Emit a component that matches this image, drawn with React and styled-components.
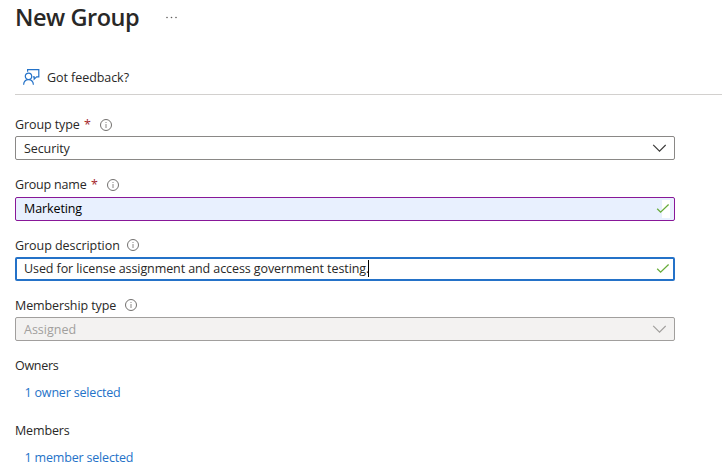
import React from "react";
import styled, { createGlobalStyle } from "styled-components";

const Global = createGlobalStyle`
  * { box-sizing: border-box; }
  body {
    margin: 0;
    background: #fff;
    color: #292827;
    font: 12.5px/18px "Open Sans", "Noto Sans", sans-serif;
    overflow: hidden;
  }
`;

const Page = styled.main`
  width: 722px;
  height: 475px;
  padding-left: 15px;
  overflow: hidden;
`;

const Header = styled.header`
  height: 60px;
  display: flex;
  align-items: flex-start;
  gap: 26px;
`;

const Title = styled.h1`
  margin: 0;
  width: 125px;
  font-size: 23.5px;
  line-height: 34px;
  font-weight: 600;
  letter-spacing: -0.45px;
  white-space: nowrap;
`;

const MoreIcon = styled.svg`
  margin-top: 16px;
  fill: #605e5c;
`;

const Toolbar = styled.div`
  height: 35px;
  display: flex;
  align-items: center;
  padding-left: 8px;
  gap: 7px;
  border-bottom: 1px solid #d2d0ce;
`;

const Text = styled.span`
  width: ${(p) => (p.$width ? `${p.$width}px` : "auto")};
  padding-top: ${(p) => p.$drop || 0}px;
  letter-spacing: ${(p) => p.$spacing || 0}px;
  white-space: nowrap;
`;

const Form = styled.form`
  width: 660px;
  padding-top: 19px;
  display: grid;
  grid-template-rows: repeat(4, 60px);
`;

const Field = styled.div`
  display: flex;
  flex-direction: column;
`;

const Label = styled.div`
  height: 22px;
  margin-bottom: ${(p) => p.$gap}px;
  display: flex;
  align-items: center;
`;

const Required = styled.span`
  width: 20px;
  padding-left: 4px;
  color: #a4262c;
  font-size: 12.5px;
`;

const borders = {
  normal: "1px solid #8a8886",
  changed: "1px solid #881798",
  focused: "2px solid #2472c8",
  disabled: "1px solid #a19f9d",
};
const fills = { changed: "#e8f0fe", disabled: "#f3f2f1" };

const Control = styled.div`
  height: 24px;
  flex: none;
  display: flex;
  align-items: center;
  padding-left: ${(p) => (p.$state === "focused" ? 7 : 8)}px;
  padding-right: ${(p) => p.$right}px;
  border: ${(p) => borders[p.$state]};
  border-radius: 2px;
  background: ${(p) => fills[p.$state] || "#fff"};
  color: ${(p) => (p.$state === "disabled" ? "#a19f9d" : p.$state === "changed" ? "#000" : "#292827")};
`;

const Caret = styled.span`
  width: 1px;
  height: 17px;
  margin-top: -1px;
  background: #000;
`;

const IconSlot = styled.span`
  margin-left: auto;
  height: 18px;
  display: flex;
  align-items: center;
  background: ${(p) => (p.$patch ? "linear-gradient(90deg, transparent 6px, #fff 6px 14px, transparent 14px)" : "none")};
`;

const Picker = styled.section`
  height: 65px;
  display: flex;
  flex-direction: column;
  gap: 9px;
`;

const Pickers = styled.div`
  padding-top: 3px;
`;

const Link = styled.a`
  padding-left: 9.5px;
  color: #2472c8;
`;

const Info = () => (
  <svg width="12" height="12" viewBox="0 0 12 12" fill="none" stroke="#72706e">
    <circle cx="6" cy="6" r="5.5" />
    <path d="M6 5v4M6 3v1" stroke="#8a8886" />
  </svg>
);

const Chevron = ({ color }) => (
  <svg width="14" height="8" viewBox="0 0 14 8" fill="none" stroke={color} strokeWidth="1.2">
    <path d="M1.2.9 7.5 7.1 13.7.9" />
  </svg>
);

const Check = () => (
  <svg width="14" height="10" viewBox="0 0 14 10" fill="none" stroke="#68ac3a" strokeWidth="1.3">
    <path d="M1.2 4.7 4.6 8.1 12.6.5" />
  </svg>
);

const FeedbackIcon = () => (
  <svg width="17" height="16" viewBox="0 0 17 16" fill="none" stroke="#2472c8" strokeWidth="1.2">
    <path d="M4.6 2.8V.7h11.2v7.1h-2.2l-2.4 2.3V7.8H9.8" />
    <circle cx="5.5" cy="7.3" r="3.2" />
    <path d="M.6 15.8c.2-3.2 2.1-5.2 4.9-5.2s4.7 2 4.9 5.2" />
  </svg>
);

function App() {
  return (
    <Page>
      <Global />
      <Header>
        <Title>New Group</Title>
        <MoreIcon width="12" height="3" viewBox="0 0 12 3">
          <circle cx="1" cy="1.5" r=".8" />
          <circle cx="5.5" cy="1.5" r=".8" />
          <circle cx="10" cy="1.5" r=".8" />
        </MoreIcon>
      </Header>
      <Toolbar>
        <FeedbackIcon />
        <Text $drop={2} $spacing={-0.06}>Got feedback?</Text>
      </Toolbar>
      <Form>
        <Field>
          <Label $gap={0}>
            <Text $width={65} $spacing={-0.1}>Group type</Text>
            <Required>*</Required>
            <Info />
          </Label>
          <Control $state="normal" $right={8}>
            <Text $drop={2} $spacing={-0.1}>Security</Text>
            <IconSlot><Chevron color="#3b3a39" /></IconSlot>
          </Control>
        </Field>
        <Field>
          <Label $gap={1}>
            <Text $width={72} $spacing={-0.2}>Group name</Text>
            <Required>*</Required>
            <Info />
          </Label>
          <Control $state="changed" $right={4}>
            <Text $spacing={-0.1}>Marketing</Text>
            <IconSlot $patch><Check /></IconSlot>
          </Control>
        </Field>
        <Field>
          <Label $gap={1}>
            <Text $drop={2} $width={112} $spacing={-0.05}>Group description</Text>
            <Info />
          </Label>
          <Control $state="focused" $right={3}>
            <Text $width={344} $spacing={-0.09}>Used for license assignment and access government testing.</Text>
            <Caret />
            <IconSlot><Check /></IconSlot>
          </Control>
        </Field>
        <Field>
          <Label $gap={1}>
            <Text $drop={2} $width={110} $spacing={-0.1}>Membership type</Text>
            <Info />
          </Label>
          <Control $state="disabled" $right={8}>
            <Text $drop={2}>Assigned</Text>
            <IconSlot><Chevron color="#a19f9d" /></IconSlot>
          </Control>
        </Field>
      </Form>
      <Pickers>
        <Picker>
          <Text $spacing={-0.3}>Owners</Text>
          <Link><Text $spacing={-0.18}>1 owner selected</Text></Link>
        </Picker>
        <Picker>
          <Text $spacing={-0.15}>Members</Text>
          <Link><Text $spacing={-0.18}>1 member selected</Text></Link>
        </Picker>
      </Pickers>
    </Page>
  );
}

export default App;
